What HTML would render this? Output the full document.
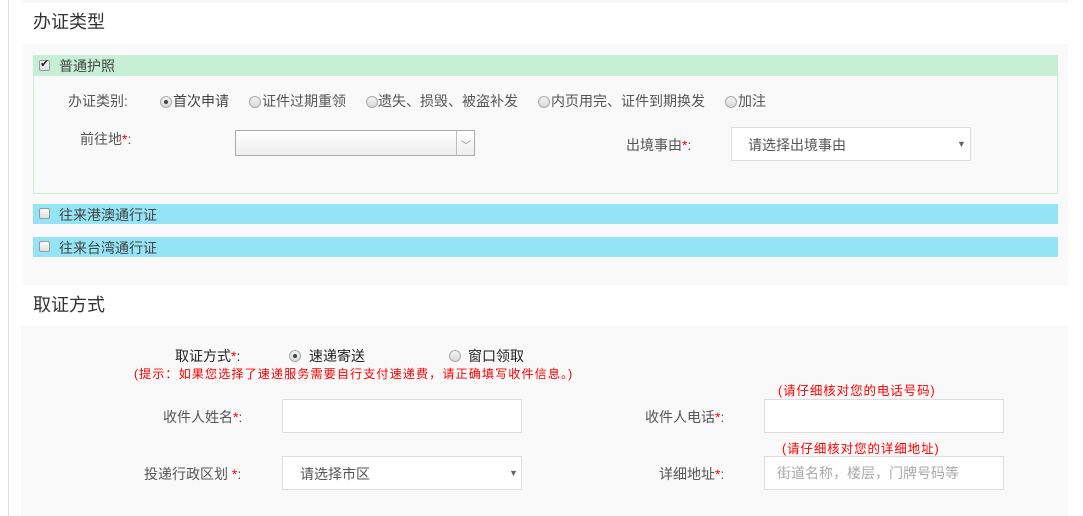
<!DOCTYPE html>
<html><head><meta charset="utf-8"><style>
*{margin:0;padding:0;box-sizing:border-box}
body{width:1083px;height:516px;background:#fff;position:relative;overflow:hidden;font-family:"Liberation Sans","Noto Sans CJK SC",sans-serif;font-size:14px;color:#555}
.a{position:absolute;white-space:nowrap}
.t{line-height:20px}
.r{color:#f00}
.rad{position:absolute;width:12px;height:12px;border-radius:50%;border:1px solid #aaa;background:linear-gradient(#f4f4f4,#d8d8d8)}
.rad.on::after{content:"";position:absolute;left:3px;top:3px;width:4px;height:4px;border-radius:50%;background:#444}
.cb{position:absolute;width:11px;height:11px;border:1px solid #999;border-radius:2px;background:linear-gradient(#fafafa,#ddd)}
.inp{position:absolute;background:#fff;border:1px solid #ddd}
.arr{position:absolute;font-size:9px;color:#666}
</style></head><body>
<div class="a" style="left:8px;top:0;width:1px;height:516px;background:#ddd"></div>
<div class="a" style="left:23px;top:0;width:1045px;height:3px;background:#f7f7f7"></div>
<div class="a t" style="left:33px;top:12px;font-size:18px;color:#333">办证类型</div>
<div class="a" style="left:23px;top:44px;width:1045px;height:241px;background:#f9f9f9"></div>
<div class="a" style="left:33px;top:55px;width:1025px;height:21px;background:#c6efd6"></div>
<div class="a" style="left:33px;top:76px;width:1025px;height:118px;border:1px solid #c6efd6;border-top:none"></div>
<div class="cb" style="left:39px;top:60px"></div><div class="a" style="left:40px;top:57px;font-size:11px;color:#222">✔</div>
<div class="a t" style="left:59px;top:56px;color:#444">普通护照</div>
<div class="a t" style="left:68px;top:91px">办证类别:</div>
<div class="rad on" style="left:160px;top:96px"></div><div class="a t" style="left:173px;top:91px;color:#444">首次申请</div>
<div class="rad" style="left:249px;top:96px"></div><div class="a t" style="left:262px;top:91px">证件过期重领</div>
<div class="rad" style="left:366px;top:96px"></div><div class="a t" style="left:378px;top:91px">遗失、损毁、被盗补发</div>
<div class="rad" style="left:538px;top:96px"></div><div class="a t" style="left:551px;top:91px">内页用完、证件到期换发</div>
<div class="rad" style="left:725px;top:96px"></div><div class="a t" style="left:738px;top:91px">加注</div>
<div class="a t" style="left:80px;top:129px">前往地<span class="r">*</span>:</div>
<div class="a" style="left:235px;top:130px;width:240px;height:26px;border:1px solid #aaa;background:linear-gradient(#fff,#eee)"></div>
<div class="a" style="left:456px;top:131px;width:1px;height:24px;background:#bbb"></div>
<div class="a" style="left:461px;top:137px;font-size:10px;color:#888">﹀</div>
<div class="a t" style="left:626px;top:135px">出境事由<span class="r">*</span>:</div>
<div class="inp" style="left:731px;top:127px;width:240px;height:34px"></div>
<div class="a t" style="left:748px;top:135px;color:#555">请选择出境事由</div>
<div class="arr" style="left:957px;top:139px">▼</div>
<div class="a" style="left:33px;top:204px;width:1025px;height:20px;background:#94e4f6"></div>
<div class="cb" style="left:39px;top:208px"></div>
<div class="a t" style="left:59px;top:205px;color:#444">往来港澳通行证</div>
<div class="a" style="left:33px;top:237px;width:1025px;height:20px;background:#94e4f6"></div>
<div class="cb" style="left:39px;top:241px"></div>
<div class="a t" style="left:59px;top:238px;color:#444">往来台湾通行证</div>
<div class="a t" style="left:33px;top:295px;font-size:18px;color:#333">取证方式</div>
<div class="a" style="left:21px;top:326px;width:1047px;height:190px;background:#f9f9f9"></div>
<div class="a t" style="left:175px;top:346px;color:#222">取证方式<span class="r">*</span>:</div>
<div class="rad on" style="left:289px;top:350px"></div><div class="a t" style="left:309px;top:346px;color:#222">速递寄送</div>
<div class="rad" style="left:449px;top:350px"></div><div class="a t" style="left:468px;top:346px;color:#222">窗口领取</div>
<div class="a t" style="left:134px;top:364px;font-size:12.2px;letter-spacing:1px;color:#f00">(提示：如果您选择了速递服务需要自行支付速递费，请正确填写收件信息。)</div>
<div class="a t" style="left:163px;top:407px">收件人姓名<span class="r">*</span>:</div>
<div class="inp" style="left:282px;top:399px;width:240px;height:34px"></div>
<div class="a t" style="left:144px;top:464px">投递行政区划 <span class="r">*</span>:</div>
<div class="inp" style="left:282px;top:456px;width:240px;height:34px"></div>
<div class="a t" style="left:300px;top:464px">请选择市区</div>
<div class="arr" style="left:509px;top:468px">▼</div>
<div class="a t" style="left:778px;top:381px;font-size:12.5px;letter-spacing:0.9px;color:#f00">(请仔细核对您的电话号码)</div>
<div class="a t" style="left:645px;top:407px">收件人电话<span class="r">*</span>:</div>
<div class="inp" style="left:764px;top:399px;width:240px;height:34px"></div>
<div class="a t" style="left:782px;top:439px;font-size:12.5px;letter-spacing:0.9px;color:#f00">(请仔细核对您的详细地址)</div>
<div class="a t" style="left:659px;top:464px">详细地址<span class="r">*</span>:</div>
<div class="inp" style="left:764px;top:456px;width:240px;height:34px"></div>
<div class="a t" style="left:777px;top:463px;color:#aaa">街道名称，楼层，门牌号码等</div>
</body></html>
